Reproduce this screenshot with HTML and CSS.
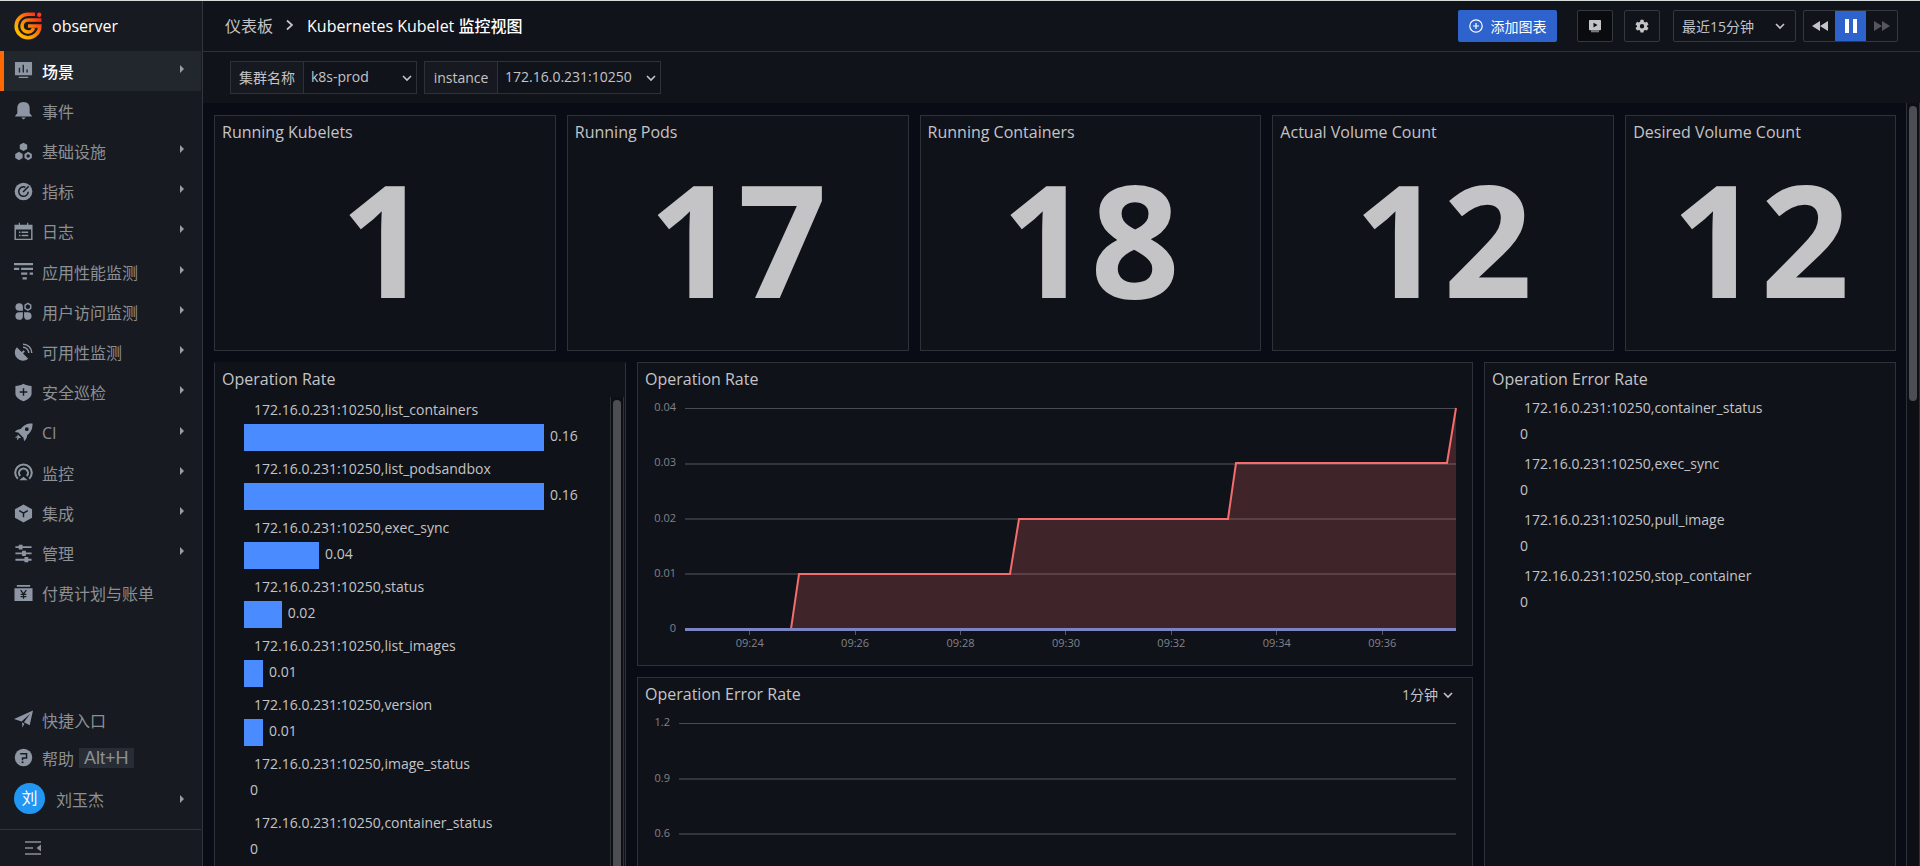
FILE: index.html
```html
<!DOCTYPE html>
<html lang="zh-CN">
<head>
<meta charset="utf-8">
<title>Kubernetes Kubelet 监控视图</title>
<link rel="stylesheet" href="styles.css">
</head>
<body>
<svg class="sprite" aria-hidden="true">
  <symbol id="caret" viewBox="0 0 4 8"><path d="M0 0l4 4-4 4z" fill="currentColor"/></symbol>
  <symbol id="chevron" viewBox="0 0 10 10"><path d="M1 3l4 4 4-4" fill="none" stroke="currentColor" stroke-width="1.6"/></symbol>
</svg>
<div class="app">
  <aside class="sidebar">
    <div class="brand">
      <svg class="brand-logo" viewBox="0 0 28 28" aria-hidden="true">
        <defs><linearGradient id="flame" gradientUnits="userSpaceOnUse" x1="2" y1="24" x2="24" y2="4"><stop offset="0" stop-color="#ffc800"/><stop offset=".5" stop-color="#ff8a00"/><stop offset="1" stop-color="#ff2a1a"/></linearGradient></defs>
        <g fill="none" stroke="url(#flame)" stroke-width="3.6">
          <path d="M21 2.200H14a11.800 11.800 0 1 0 11.800 11.800H14"/>
          <path d="M27.400 8H14a6 6 0 1 0 5.700 8"/>
        </g>
        <circle cx="25.200" cy="2.800" r="2.200" fill="#ff3a1c"/>
      </svg>
      <span class="brand-name">observer</span>
    </div>
    <nav class="menu">
      <a class="menu-item active" href="#"><svg class="icon" viewBox="0 0 20 20"><path fill="currentColor" fill-rule="evenodd" d="M1 1h18v14H1zM5 7v5h1.500V7zm4-3v8h1.500V4zm4 5v3h1.500V9zM5 16.500h10V18H5z"/></svg><span>场景</span><svg class="caret"><use href="#caret"/></svg></a>
      <a class="menu-item" href="#"><svg class="icon" viewBox="0 0 20 20"><path fill="currentColor" d="M10 1c4.500 0 6.500 3 6.500 6.500V13l2.200 2.500v.8H1.300v-.8L3.500 13V7.500C3.500 4 5.500 1 10 1zM7.500 17.300h5L10 19.500z"/></svg><span>事件</span></a>
      <a class="menu-item" href="#"><svg class="icon" viewBox="0 0 20 20"><g fill="currentColor"><path d="M10 .7l3.900 2.200v4.400L10 9.500 6.100 7.300V2.900zM5.200 10.300l3.900 2.200v4.400l-3.900 2.200-3.900-2.200v-4.400z"/><path fill-rule="evenodd" d="M14.900 10.300l3.900 2.200v4.400l-3.900 2.200-3.900-2.200v-4.400zm0 2.600a1.800 1.800 0 1 0 0 3.600 1.800 1.800 0 0 0 0-3.600z"/></g></svg><span>基础设施</span><svg class="caret"><use href="#caret"/></svg></a>
      <a class="menu-item" href="#"><svg class="icon" viewBox="0 0 20 20"><circle cx="10" cy="10" r="9.300" fill="currentColor"/><path d="M12 5.500a5 5 0 1 0 3 4.800M15.500 4.500L9.500 10.500" fill="none" stroke="#171b21" stroke-width="1.600"/></svg><span>指标</span><svg class="caret"><use href="#caret"/></svg></a>
      <a class="menu-item" href="#"><svg class="icon" viewBox="0 0 20 20"><path fill="currentColor" fill-rule="evenodd" d="M.5 3H5V.8h1.300V3h7.400V.8H15V3h4.500v16H.5zM2 8v9.500h16V8zm3.200 2h1.600v1.500H5.200zm2.800 0h7v1.500H8zm-2.800 3.500h1.600V15H5.200zm2.800 0h7V15H8z"/></svg><span>日志</span><svg class="caret"><use href="#caret"/></svg></a>
      <a class="menu-item" href="#"><svg class="icon" viewBox="0 0 20 20"><path fill="currentColor" d="M0 1h20v2.400H0zM0 6h5.500v2.400H0zM7.500 6H20v2.400H7.500zM7.500 11H14v2.400H7.500zM16.500 11H20v2.400h-3.500zM9 16h4.500v2.400H9z"/></svg><span>应用性能监测</span><svg class="caret"><use href="#caret"/></svg></a>
      <a class="menu-item" href="#"><svg class="icon" viewBox="0 0 20 20"><g fill="currentColor"><path d="M5.500 1.200A3.900 3.900 0 0 1 9.400 5v4.200H5.500a4 4 0 0 1 0-8zM5.500 18.800A3.900 3.900 0 0 0 9.400 15v-4.200H5.500a4 4 0 0 0 0 8zM14.500 18.800a3.900 3.900 0 0 1-3.900-3.800v-4.200h3.900a4 4 0 0 1 0 8z"/></g><path d="M14.600 1.500l3 1.800v3.500l-3 1.800-3-1.800V3.300z" fill="none" stroke="currentColor" stroke-width="1.500"/></svg><span>用户访问监测</span><svg class="caret"><use href="#caret"/></svg></a>
      <a class="menu-item" href="#"><svg class="icon" viewBox="0 0 20 20"><path fill="currentColor" d="M3 4.500L8 9.500l2-2 1.500 1.500-2 2 5.500 5.500A8.500 8.500 0 0 1 3 4.500z"/><path d="M9.500 4.500a6 6 0 0 1 6 6M9.500 1.300a9 9 0 0 1 9.200 9.200" fill="none" stroke="currentColor" stroke-width="1.500"/></svg><span>可用性监测</span><svg class="caret"><use href="#caret"/></svg></a>
      <a class="menu-item" href="#"><svg class="icon" viewBox="0 0 20 20"><path fill="currentColor" d="M10 .8c2.500 1.500 5 2.200 8.500 2.400v8c0 3.500-4.500 6.500-8.500 8-4-1.500-8.500-4.500-8.500-8v-8C5 3 7.500 2.300 10 .8z"/><path d="M10 5.500v8M6 9.500h8" stroke="#171b21" stroke-width="1.500"/></svg><span>安全巡检</span><svg class="caret"><use href="#caret"/></svg></a>
      <a class="menu-item" href="#"><svg class="icon" viewBox="0 0 20 20"><path fill="currentColor" fill-rule="evenodd" d="M19.500.5c.2 6-2 9.500-5.700 12.400-.2 2.500-.7 4.200-3.200 6.200L10 15.500 4.500 10 .9 9.400C2.900 6.900 4.600 6.400 7.100 6.200 10 2.500 13.500.3 19.500.5zM13.500 4.500a2 2 0 1 0 0 4 2 2 0 0 0 0-4z"/><path fill="currentColor" d="M4 12l3.500 3.500L5 16l-1 2-1-.8 1-2.200-2 .8-.7-1L3.500 14z"/></svg><span>CI</span><svg class="caret"><use href="#caret"/></svg></a>
      <a class="menu-item" href="#"><svg class="icon" viewBox="0 0 20 20"><g fill="none" stroke="currentColor" stroke-width="2.200"><path d="M4 16.500a8.700 8.700 0 1 1 12 0"/><path d="M6.500 13.700a4.700 4.700 0 1 1 7 0"/></g><path fill="currentColor" d="M10 14.500l4.500 3.700H5.500z"/></svg><span>监控</span><svg class="caret"><use href="#caret"/></svg></a>
      <a class="menu-item" href="#"><svg class="icon" viewBox="0 0 20 20"><path fill="currentColor" d="M10 .5l9 5v9l-9 5-9-5v-9z"/><path d="M5.500 7l4.500 2.700L14.500 7M10 9.700V14" fill="none" stroke="#171b21" stroke-width="1.500"/></svg><span>集成</span><svg class="caret"><use href="#caret"/></svg></a>
      <a class="menu-item" href="#"><svg class="icon" viewBox="0 0 20 20"><path fill="currentColor" d="M1.500 2.400H5V.7h4v1.700h9.500v1.800H9v1.700H5V4.200H1.500zM1.500 9h7V7.200h4V9h6v1.900h-6v1.800h-4v-1.800h-7zM1.500 15.600H11v-1.800h4v1.800h3.500v1.900H15v1.700h-4v-1.700H1.500z"/></svg><span>管理</span><svg class="caret"><use href="#caret"/></svg></a>
      <a class="menu-item" href="#"><svg class="icon" viewBox="0 0 20 20"><path fill="currentColor" d="M3 1h14v1.800H3zM.5 4.500h19V18H.5z"/><path d="M7 6.500l3 4 3-4M10 10.500v5M7 11h6M7 13.300h6" fill="none" stroke="#171b21" stroke-width="1.300"/></svg><span>付费计划与账单</span></a>
    </nav>
    <div class="menu-bottom">
      <a class="bottom-item" href="#"><svg class="icon" viewBox="0 0 20 20"><path fill="currentColor" d="M20 .5L16.500 16 10.500 13 17 4 8 12 0 9.500zM8.500 13.200l2.500 1.300-2.200 4z"/></svg><span>快捷入口</span></a>
      <a class="bottom-item" href="#"><svg class="icon" viewBox="0 0 20 20"><circle cx="10" cy="10" r="9.200" fill="currentColor"/><path d="M6.500 6h6.700v4.500H9V13" fill="none" stroke="#171b21" stroke-width="1.600"/><path d="M8 14.200h2v1.700H8z" fill="#171b21"/></svg><span>帮助</span><kbd>Alt+H</kbd></a>
      <a class="bottom-item user" href="#"><span class="avatar">刘</span><span>刘玉杰</span><svg class="caret"><use href="#caret"/></svg></a>
    </div>
    <button class="collapse" type="button" aria-label="收起菜单"><svg viewBox="0 0 16 14"><path d="M0 1h16M0 7h8M0 13h16" stroke="currentColor" stroke-width="1.400"/><path d="M16 3.500v7L11.500 7z" fill="currentColor"/></svg></button>
  </aside>

  <main class="main">
    <header class="topbar">
      <nav class="crumbs">
        <a href="#">仪表板</a>
        <svg viewBox="0 0 10 12" aria-hidden="true"><path d="M2 1.500L7 6l-5 4.500" fill="none" stroke="currentColor" stroke-width="1.700"/></svg>
        <h1>Kubernetes Kubelet 监控视图</h1>
      </nav>
      <div class="tools">
        <button class="btn-primary" type="button"><svg viewBox="0 0 14 14"><g fill="none" stroke="currentColor" stroke-width="1.200"><circle cx="7" cy="7" r="6.200"/><path d="M7 4v6M4 7h6"/></g></svg>添加图表</button>
        <button class="btn-icon btn-dark" type="button" aria-label="播放"><svg viewBox="0 0 14 14"><path fill="currentColor" fill-rule="evenodd" d="M1.800 1h10.400q.8 0 .8.800v8.700q0 .8-.8.800H1.800q-.8 0-.8-.8V1.800Q1 1 1.800 1zM5.500 3.700v4.800L9.500 6.100z"/><path fill="currentColor" fill-opacity=".6" d="M3 11.300h8v2H3z"/></svg></button>
        <button class="btn-icon btn-gear" type="button" aria-label="设置"><svg viewBox="0 0 14 14"><path fill="currentColor" fill-rule="evenodd" d="M5.500.8h3l.4 1.900 1.200.7 1.900-.6 1.500 2.600L12 6.700v1l1.500 1.200-1.500 2.600-1.900-.6-1.200.7-.4 1.900h-3l-.4-1.900-1.200-.7-1.900.6L.5 8.900 2 7.700v-1L.5 5.400 2 2.800l1.900.6 1.200-.7zM7 5a2.200 2.200 0 1 0 0 4.400A2.200 2.200 0 0 0 7 5z"/></svg></button>
        <div class="select time-range"><select aria-label="时间范围"><option>最近15分钟</option></select><svg class="chev"><use href="#chevron"/></svg></div>
        <div class="player">
          <button type="button" aria-label="后退"><svg viewBox="0 0 16 12"><path fill="currentColor" d="M8 1v10L0 6zM16 1v10L8 6z"/></svg></button>
          <button class="on" type="button" aria-label="暂停"><svg viewBox="0 0 16 16"><path fill="currentColor" d="M2 1h4v14H2zM10 1h4v14h-4z"/></svg></button>
          <button class="off" type="button" aria-label="前进"><svg viewBox="0 0 16 12"><path fill="currentColor" d="M0 1v10l8-5zM8 1v10l8-5z"/></svg></button>
        </div>
      </div>
    </header>

    <div class="filters">
      <div class="filter"><label for="cluster">集群名称</label><div class="select cluster"><select id="cluster"><option>k8s-prod</option></select><svg class="chev"><use href="#chevron"/></svg></div></div>
      <div class="filter"><label for="instance">instance</label><div class="select instance"><select id="instance"><option>172.16.0.231:10250</option></select><svg class="chev"><use href="#chevron"/></svg></div></div>
    </div>

    <div class="board">
      <div class="board-content">
        <div class="stats">
          <section class="panel stat"><h2>Running Kubelets</h2><p>1</p></section>
          <section class="panel stat"><h2>Running Pods</h2><p>17</p></section>
          <section class="panel stat"><h2>Running Containers</h2><p>18</p></section>
          <section class="panel stat"><h2>Actual Volume Count</h2><p>12</p></section>
          <section class="panel stat"><h2>Desired Volume Count</h2><p>12</p></section>
        </div>
        <div class="charts">
          <section class="panel ranking">
            <h2>Operation Rate</h2>
            <div class="ranking-body">
              <ul class="bars">
                <li><span class="name">172.16.0.231:10250,list_containers</span><div class="bar-row"><i class="bar" style="width:82%"></i><b>0.16</b></div></li>
                <li><span class="name">172.16.0.231:10250,list_podsandbox</span><div class="bar-row"><i class="bar" style="width:82%"></i><b>0.16</b></div></li>
                <li><span class="name">172.16.0.231:10250,exec_sync</span><div class="bar-row"><i class="bar" style="width:20.5%"></i><b>0.04</b></div></li>
                <li><span class="name">172.16.0.231:10250,status</span><div class="bar-row"><i class="bar" style="width:10.3%"></i><b>0.02</b></div></li>
                <li><span class="name">172.16.0.231:10250,list_images</span><div class="bar-row"><i class="bar" style="width:5.2%"></i><b>0.01</b></div></li>
                <li><span class="name">172.16.0.231:10250,version</span><div class="bar-row"><i class="bar" style="width:5.2%"></i><b>0.01</b></div></li>
                <li><span class="name">172.16.0.231:10250,image_status</span><div class="bar-row"><b>0</b></div></li>
                <li><span class="name">172.16.0.231:10250,container_status</span><div class="bar-row"><b>0</b></div></li>
              </ul>
              <div class="track"><div class="thumb"></div></div>
            </div>
          </section>

          <div class="middle">
            <section class="panel chart">
              <h2>Operation Rate</h2>
              <div class="plot">
                <div class="y-axis wide"><span>0.04</span><span>0.03</span><span>0.02</span><span>0.01</span><span>0</span></div>
                <div class="plot-area">
                  <svg class="series" viewBox="0 0 771 221" preserveAspectRatio="none">
                    <path class="grid-line top" d="M0 .5H771"/>
                    <path class="grid-line" d="M0 56H771M0 111H771M0 166H771"/>
                    <path class="area" d="M106 221L114 166H325L334 111H543L551 55H762L771 0V221z"/>
                    <path class="line" d="M0 221H106L114 166H325L334 111H543L551 55H762L771 0"/>
                    <path class="zero" d="M0 221.500H771"/>
                  </svg>
                  <div class="x-axis"><span>09:24</span><span>09:26</span><span>09:28</span><span>09:30</span><span>09:32</span><span>09:34</span><span>09:36</span></div>
                </div>
              </div>
            </section>
            <section class="panel chart">
              <div class="chart-head"><h2>Operation Error Rate</h2><div class="select interval"><select aria-label="时间间隔"><option>1分钟</option></select><svg class="chev"><use href="#chevron"/></svg></div></div>
              <div class="plot">
                <div class="y-axis"><span>1.2</span><span>0.9</span><span>0.6</span></div>
                <div class="plot-area">
                  <svg class="series half" viewBox="0 0 777 111" preserveAspectRatio="none">
                    <path class="grid-line top" d="M0 .5H777"/>
                    <path class="grid-line" d="M0 56H777M0 111H777"/>
                  </svg>
                </div>
              </div>
            </section>
          </div>

          <section class="panel">
            <h2>Operation Error Rate</h2>
            <ul class="bars compact">
              <li><span class="name">172.16.0.231:10250,container_status</span><div class="bar-row"><b>0</b></div></li>
              <li><span class="name">172.16.0.231:10250,exec_sync</span><div class="bar-row"><b>0</b></div></li>
              <li><span class="name">172.16.0.231:10250,pull_image</span><div class="bar-row"><b>0</b></div></li>
              <li><span class="name">172.16.0.231:10250,stop_container</span><div class="bar-row"><b>0</b></div></li>
            </ul>
          </section>
        </div>
      </div>
      <div class="track"><div class="thumb short"></div></div>
    </div>
  </main>
</div>
</body>
</html>
```
FILE: styles.css
```css
* { box-sizing: border-box; margin: 0; padding: 0; }
:root {
  --line: #2d3138;
  --panel: #101219;
  --text: #c4c4c6;
  --muted: #8d8f93;
}
body {
  height: 100vh;
  overflow: hidden;
  border-top: 1px solid #d5dcda;
  background: #090c14;
  color: var(--text);
  font: 16px "Open Sans", "Noto Sans CJK SC", sans-serif;
}
button, select { font: inherit; color: inherit; background: none; border: 0; }
a { color: inherit; text-decoration: none; }
ul { list-style: none; }
h1, h2 { font-size: 16px; font-weight: 400; }
.sprite { display: none; }
.app { display: flex; height: 100%; }

/* sidebar */
.sidebar {
  display: flex;
  flex: none;
  flex-direction: column;
  width: 203px;
  padding-right: 1px;
  border-right: 1px solid #33363c;
  background: #171b21;
  color: var(--muted);
}
.brand { display: flex; align-items: center; gap: 10px; height: 50px; padding-left: 14px; }
.brand-logo { width: 28px; height: 28px; }
.brand-name { color: #fff; }
.menu { display: flex; flex-direction: column; min-height: 563px; }
.menu-item, .bottom-item { display: flex; align-items: center; gap: 9px; padding: 0 17px 1px 14px; white-space: nowrap; }
.menu-item { flex: 1; }
.menu-item.active { padding-left: 10px; border-left: 4px solid #ff6a00; background: #22262d; color: #fff; font-weight: 500; }
.icon { flex: none; width: 19px; height: 19px; color: #8f96a3; }
.caret { width: 4px; height: 8px; margin-left: auto; margin-bottom: 4px; color: #9a9da3; }
.menu-bottom { margin-top: auto; padding-bottom: 8px; }
.bottom-item { height: 38px; }
.user { height: 44px; gap: 11px; }
.avatar { width: 31px; height: 31px; border-radius: 50%; background: #2196f3; color: #fff; line-height: 30px; text-align: center; }
.user .caret { margin-bottom: 0; }
kbd { height: 20px; margin-left: -4px; padding: 0 5px; background: #282d35; font: 18px/20px "Liberation Sans", sans-serif; }
.collapse { display: flex; align-items: center; height: 37px; padding-left: 25px; border-top: 1px solid #30343b; }
.collapse svg { width: 16px; height: 14px; }

/* top bar */
.main { display: flex; flex: 1; flex-direction: column; min-width: 0; }
.topbar { display: flex; flex: none; align-items: center; justify-content: space-between; height: 51px; padding: 0 22px; border-bottom: 1px solid var(--line); background: #10131a; }
.crumbs { display: flex; align-items: center; gap: 12px; padding-bottom: 2px; }
.crumbs svg { width: 10px; height: 12px; }
.crumbs h1 { color: #fff; font-weight: 500; }
.tools { display: flex; font-size: 14px; }
.btn-primary { display: flex; align-items: center; justify-content: center; gap: 8px; width: 99px; height: 32px; margin-right: 20px; border-radius: 2px; background: #2e62cc; color: #fff; white-space: nowrap; }
.btn-primary svg { flex: none; width: 14px; height: 14px; }
.btn-icon { display: flex; align-items: center; justify-content: center; width: 36px; height: 32px; margin-right: 11px; border: 1px solid #34373d; border-radius: 2px; }
.btn-icon svg { width: 14px; height: 14px; }
.btn-dark { background: #090b0f; }
.btn-gear { margin-right: 13px; }
.select { display: flex; position: relative; align-items: center; }
.select select { width: 100%; height: 100%; padding: 0 24px 0 8px; appearance: none; }
.select option { background: var(--panel); }
.chev { position: absolute; right: 10px; width: 10px; height: 10px; pointer-events: none; }
.time-range { width: 123px; height: 32px; margin-right: 7px; border: 1px solid #34373d; border-radius: 2px; }
.player { display: flex; width: 95px; height: 32px; overflow: hidden; border: 1px solid #34373d; border-radius: 2px; }
.player button { display: flex; flex: 1; align-items: center; justify-content: center; }
.player svg { width: 16px; height: 12px; }
.player .on { margin: -1px 0; background: #2e62cc; color: #fff; }
.player .on svg { height: 16px; }
.player .off { color: #55575c; }

/* filters */
.filters { display: flex; flex: none; gap: 7px; height: 51px; padding: 9px 27px; background: #10131a; font-size: 14px; }
.filter { display: flex; height: 33px; border: 1px solid var(--line); }
.filter label { min-width: 73px; padding: 0 8px; border-right: 1px solid var(--line); background: #16191f; line-height: 31px; text-align: center; }
.filter select { padding: 0 20px 2px 7px; }
.cluster { width: 112px; }
.instance { width: 162px; }
.filter .chev { right: 4px; }

/* dashboard */
.board { display: flex; flex: 1; min-height: 0; }
.board-content { display: flex; flex: 1; flex-direction: column; gap: 11px; min-width: 0; padding: 12px 10px 0 11px; }
.track { flex: none; width: 14px; padding: 3px 2px; border: solid var(--line); border-width: 0 1px; background: #0d0f15; }
.thumb { width: 8px; height: 100%; border-radius: 4px; background: #4d4e53; }
.short { height: 39%; }
.panel { min-width: 0; border: 1px solid var(--line); background: var(--panel); }
.panel h2 { padding: 0 7px 2px; line-height: 32px; }
.stats { display: grid; flex: none; grid-template-columns: repeat(4, 342fr) 271fr; gap: 11px; }
.stat { min-height: 236px; }
.stat p { font-size: 156px; font-weight: 700; line-height: 176px; text-align: center; }
.charts { display: grid; flex: 1; grid-template-columns: 412fr 836fr 412fr; gap: 11px; min-height: 0; }
.charts > .panel { display: flex; flex-direction: column; border-bottom: 0; overflow: hidden; }
.charts > .ranking { border-top-color: var(--panel); }
.ranking-body { display: flex; flex: 1; min-height: 0; padding-right: 1px; }
.ranking-body > .track { padding-bottom: 0; }
.ranking-body .thumb { border-radius: 4px 4px 0 0; }
.bars { flex: 1; min-width: 0; padding-left: 29px; font-size: 14px; }
.bars li { margin-bottom: 5px; }
.name { display: block; padding: 0 0 2px 10px; line-height: 25px; white-space: nowrap; }
.bar-row { display: flex; align-items: center; gap: 6px; height: 27px; }
.bar { height: 27px; background: #4a8bff; }
.bars b { padding-bottom: 5px; font-weight: 400; }
.bars b:only-child { padding-left: 6px; }
.compact li { margin-bottom: 6px; }
.compact .name { padding-bottom: 0; line-height: 22px; }
.compact .bar-row { height: 28px; }
.compact b { padding-bottom: 0; }
.middle { display: flex; flex-direction: column; gap: 11px; min-width: 0; min-height: 0; overflow: hidden; }
.chart { flex: none; min-height: 304px; }
.chart-head { display: flex; justify-content: space-between; padding-right: 9px; font-size: 14px; }
.interval select { padding: 0 24px 2px 0; }
.plot { display: flex; gap: 9px; padding: 3px 16px 0 7px; color: #808389; font-size: 11px; }
.y-axis { display: flex; flex: none; flex-direction: column; justify-content: space-between; width: 25px; height: 125px; line-height: 14px; text-align: right; }
.y-axis.wide { width: 31px; height: 235px; }
.plot-area { flex: 1; min-width: 0; padding-top: 8px; }
.series { display: block; width: 100%; height: 221px; overflow: visible; }
.series.half { height: 111px; }
.series path { fill: none; vector-effect: non-scaling-stroke; }
.series .grid-line { stroke: #32353b; stroke-width: 2px; }
.series .top { stroke: #484b51; stroke-width: 1px; }
.series .area { fill: #ff6e6e; fill-opacity: .2; }
.series .line { stroke: #f56c6c; stroke-width: 2px; }
.series .zero { stroke: #7b83c4; stroke-width: 3px; }
.x-axis { display: flex; padding: 2px 21px 0 12px; }
.x-axis span { flex: 1; line-height: 14px; text-align: center; }
.x-axis span::before { content: ""; display: block; width: 1px; height: 4px; margin: 0 auto 1px; background: #55585e; }
```
